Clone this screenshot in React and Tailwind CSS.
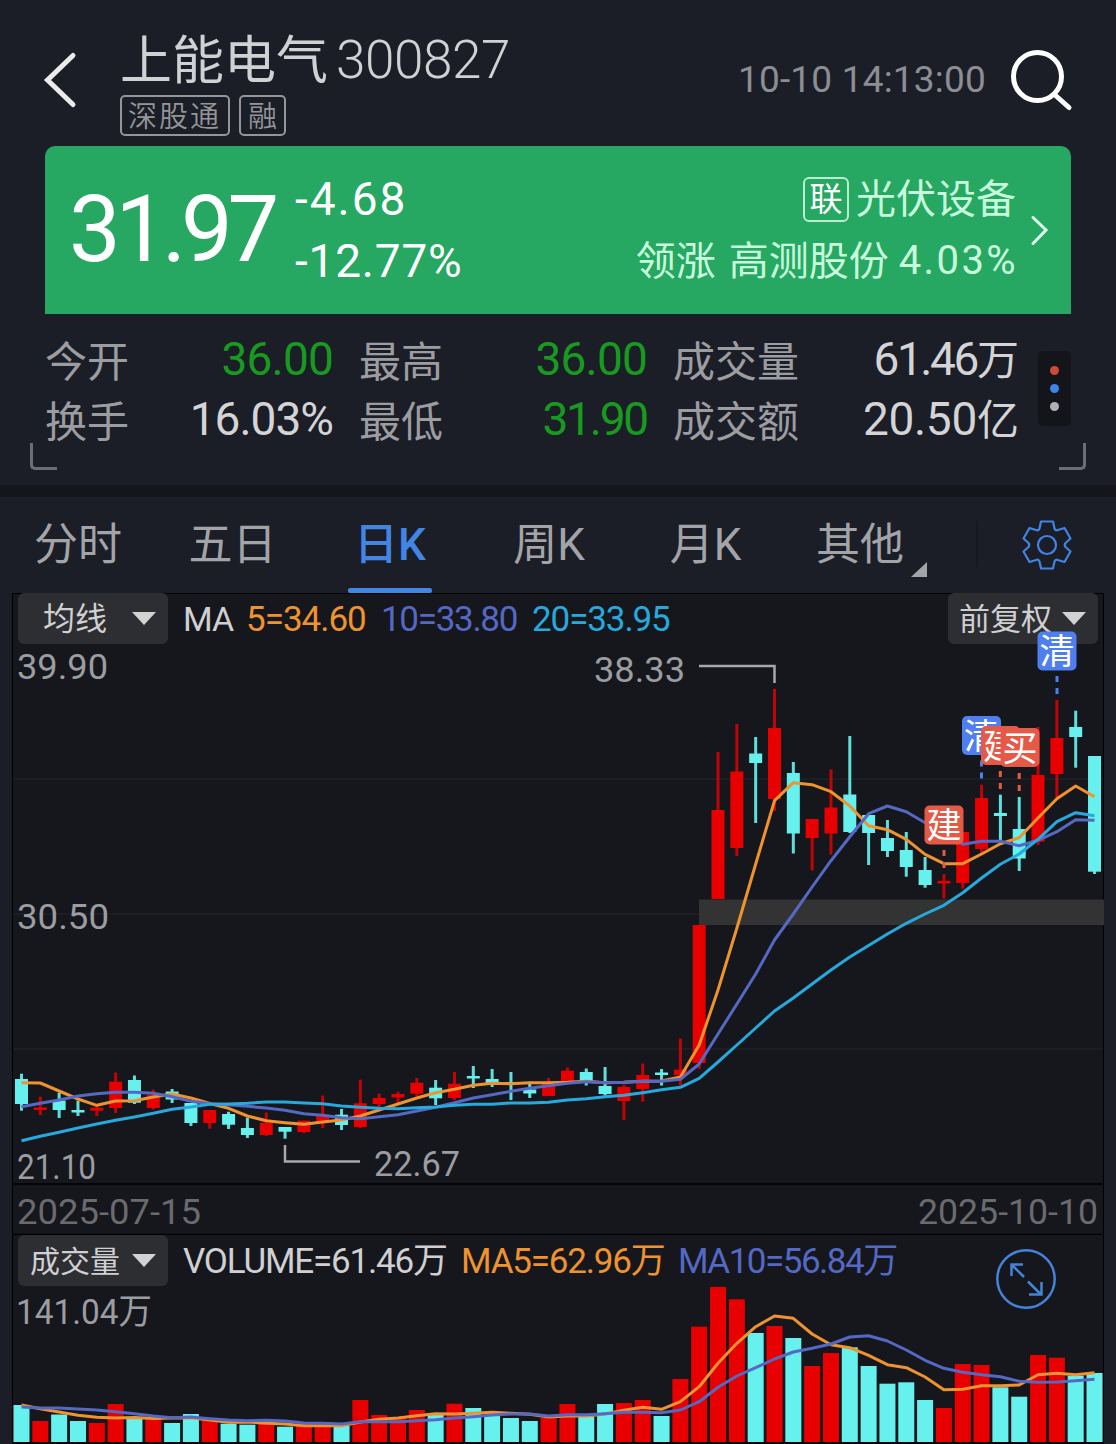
import clsx from 'clsx';

const UP = '#e80000';
const DOWN = '#66f0ee';
const COLORS = { ma5: '#ee9330', ma10: '#5468c4', ma20: '#27a9dd' };

// [color, high, bodyTop, bodyBottom, low, volumeTop]
const CANDLES = [
  ['d', 1073.7, 1079, 1104, 1110.7, 1405],
  ['u', 1096.7, 1107.5, 1110, 1115, 1421],
  ['d', 1092.7, 1100.5, 1110, 1118, 1414.5],
  ['d', 1100.7, 1110, 1112.5, 1116, 1421],
  ['u', 1105, 1107.7, 1110.7, 1116, 1423],
  ['u', 1072.5, 1081.7, 1108, 1113, 1404],
  ['d', 1075.5, 1080, 1102.7, 1104, 1417.7],
  ['u', 1089.5, 1095, 1108, 1109.5, 1419],
  ['d', 1089, 1091.5, 1099.5, 1103, 1423],
  ['d', 1103, 1103, 1123, 1126, 1414],
  ['u', 1110, 1110, 1123, 1128.7, 1420],
  ['d', 1111.7, 1114, 1124.7, 1129, 1423.7],
  ['d', 1117.7, 1128, 1135, 1138, 1424.7],
  ['u', 1112.5, 1123, 1135, 1136, 1423.3],
  ['d', 1127, 1127, 1131.7, 1138.7, 1426.7],
  ['u', 1120.7, 1120.7, 1132, 1133, 1423],
  ['u', 1095.5, 1115.7, 1123, 1128, 1424],
  ['d', 1109, 1114.7, 1125, 1130, 1426],
  ['u', 1079.7, 1103.3, 1127, 1128, 1400],
  ['u', 1093.5, 1098, 1104, 1107, 1415],
  ['u', 1091.7, 1094, 1097.5, 1103, 1418.5],
  ['u', 1078, 1082.7, 1093.7, 1096, 1410],
  ['d', 1080, 1087.7, 1098.3, 1105, 1415],
  ['u', 1072, 1083.7, 1098, 1100, 1403.7],
  ['d', 1066, 1076, 1078.5, 1088, 1408],
  ['d', 1069, 1079, 1083.5, 1087, 1415],
  ['d', 1072, 1082, 1084, 1100, 1418],
  ['d', 1081.7, 1089.5, 1093.5, 1098, 1421],
  ['u', 1078, 1083.5, 1096, 1096, 1418],
  ['u', 1067.5, 1070.7, 1081.5, 1081.5, 1404],
  ['d', 1068.5, 1072, 1081.5, 1085.5, 1416.7],
  ['d', 1067, 1086, 1094, 1095.5, 1404],
  ['u', 1084.7, 1087, 1101, 1120, 1403],
  ['u', 1063.5, 1075, 1089, 1101.7, 1400],
  ['d', 1069, 1072.5, 1075, 1085.5, 1416],
  ['u', 1038.5, 1069.7, 1075, 1085, 1379],
  ['u', 925, 925, 1063, 1069, 1326.7],
  ['u', 752, 810, 899, 899, 1287],
  ['u', 724, 771.5, 848, 856, 1299.3],
  ['d', 737, 753.5, 763, 823, 1333],
  ['u', 689, 728, 799, 811, 1326],
  ['d', 762, 773, 833.5, 853.5, 1338],
  ['u', 819, 819, 838, 870.5, 1366],
  ['u', 769.5, 807.5, 833.5, 854.5, 1353],
  ['d', 736, 794.5, 832, 833, 1347.3],
  ['d', 815, 815, 833, 865, 1366],
  ['d', 820, 838, 851, 857, 1383.7],
  ['d', 832, 850, 867, 876.7, 1382.3],
  ['d', 857, 870, 885, 887.7, 1400],
  ['u', 874, 881, 883.5, 898.5, 1408],
  ['u', 832, 832, 883, 888.7, 1364],
  ['u', 784.7, 798, 849, 853, 1365],
  ['d', 794.7, 813, 816, 840.7, 1387.3],
  ['d', 797, 829, 858.5, 871, 1396.7],
  ['u', 727, 775, 841.7, 845, 1355],
  ['u', 700, 738, 774, 798, 1357.7],
  ['d', 710.7, 727, 737, 767.7, 1375.7],
  ['d', 756, 756, 871.7, 874, 1373],
];

const MA5 = [
  1082.7, 1083, 1091, 1099, 1105.3, 1101, 1100.7, 1097, 1094, 1098, 1103.5, 1108.3, 1116, 1120.7, 1122.7,
  1124.3, 1122, 1120, 1116, 1110, 1104, 1098, 1092.7, 1089.3, 1085.3, 1083.3, 1083.7, 1082.7, 1082.7, 1082.3,
  1081.3, 1082.7, 1082.3, 1081.3, 1081, 1077, 1045, 990, 928, 864, 800.7, 782.7, 784.7, 791.7, 806,
  825.7, 829.7, 839.3, 854.3, 863.7, 863.7, 854, 843.7, 837.7, 818, 798.7, 786, 796.7,
];
const MA10 = [
  1106.7, 1103.3, 1100, 1096, 1093.7, 1092.3, 1092.3, 1093.3, 1096.7, 1101.3, 1103.7, 1104.7, 1106.3, 1108, 1110.3,
  1113.7, 1115.3, 1117.7, 1118.7, 1116.7, 1114.7, 1111, 1107.3, 1102.7, 1098, 1094.7, 1091.3, 1088.3, 1085.7, 1083.3,
  1081.7, 1082.7, 1082.3, 1081.3, 1081.3, 1079.3, 1064, 1034, 1004, 974, 940, 914, 887, 860.7, 836.7,
  813.7, 806, 811.7, 822.7, 833, 844.3, 841.3, 841.3, 845.7, 840.3, 831.7, 819.7, 820.3,
];
const MA20 = [
  1140.7, 1136.3, 1132.3, 1128, 1124, 1120.3, 1117, 1113.3, 1109.3, 1107, 1104.3, 1104, 1103.3, 1102, 1102,
  1103, 1103.7, 1106, 1107.3, 1108.3, 1108.7, 1107.7, 1107, 1105.3, 1104.3, 1104.3, 1103, 1103, 1102.3, 1100,
  1098.7, 1096.7, 1095.3, 1092.7, 1089.7, 1087.3, 1078.3, 1062, 1045, 1028, 1011, 998, 984, 970, 957,
  945.5, 934, 923.3, 914, 905.3, 892.7, 878, 864.3, 854, 839.3, 821.7, 812.7, 815.7,
];
const VOL_MA5 = [
  1405, 1408.7, 1412, 1415.3, 1417.3, 1418, 1417.5, 1418.5, 1418, 1417.7, 1420, 1422.3, 1422, 1423.3, 1424,
  1425.7, 1425.7, 1425.7, 1422, 1419.3, 1418, 1415.7, 1413.7, 1414, 1413.3, 1412.3, 1413.3, 1414.3, 1417, 1416,
  1416, 1414, 1410.3, 1407.3, 1409.3, 1401.7, 1386.7, 1363.3, 1343.3, 1326.7, 1316, 1318.3, 1334, 1344.7, 1347.7,
  1355.3, 1364.7, 1367.7, 1377, 1389.7, 1389.3, 1385.7, 1385.7, 1385, 1374.7, 1373.3, 1374.7, 1372.7,
];
const VOL_MA10 = [
  1407, 1408, 1408, 1409, 1410, 1411.7, 1413.7, 1416, 1417.7, 1417, 1418.7, 1420, 1420.7, 1420.3, 1421,
  1423, 1423.3, 1424, 1421.7, 1421.7, 1421.7, 1420.7, 1419.7, 1418, 1416.7, 1415, 1414, 1414, 1416, 1414.7,
  1414.7, 1413.7, 1412.3, 1412.3, 1412.7, 1410, 1401.7, 1387.3, 1376, 1367.7, 1359, 1352, 1348.3, 1344, 1337,
  1335.7, 1341, 1350, 1360.3, 1368.3, 1372.3, 1374.7, 1376.7, 1381.3, 1382.3, 1382, 1380.7, 1379.3,
];

const MARKERS = [
  { text: '清', x: 962, y: 716, type: 'sell', stem: 981.5, dashes: [760.5, 772.5] },
  { text: '建', x: 981, y: 726, type: 'buy', stem: 1000.3, dashes: [771, 783] },
  { text: '买', x: 1000.5, y: 728, type: 'buy', stem: 1019.2, dashes: [773, 785] },
  { text: '清', x: 1037.5, y: 631.5, type: 'sell', stem: 1057, dashes: [676, 688] },
  { text: '建', x: 924.5, y: 805.5, type: 'buy', stem: 944, dashes: [850, 862] },
];

const STATS = [
  [
    { label: '今开', value: '36.00', className: 'tracking-[-0.8px] text-[#189a20]' },
    { label: '换手', value: '16.03%', className: 'tracking-[-1px] text-[#d4d4d6]' },
  ],
  [
    { label: '最高', value: '36.00', className: 'tracking-[-0.8px] text-[#189a20]' },
    { label: '最低', value: '31.90', className: 'tracking-[-2.2px] text-[#189a20]' },
  ],
  [
    { label: '成交量', value: '61.46', unit: '万', className: 'tracking-[-2.4px] text-[#d4d4d6]' },
    { label: '成交额', value: '20.50', unit: '亿', className: 'tracking-[-0.3px] text-[#d4d4d6]' },
  ],
];

const xAt = (i) => 21.5 + i * 18.825;
const toPoints = (values) => values.map((y, i) => `${xAt(i).toFixed(1)},${y}`).join(' ');

function Line({ values, color }) {
  return <polyline points={toPoints(values)} fill="none" stroke={color} strokeWidth="3" strokeLinejoin="round" />;
}

function Label({ x, y, width, size = 35, fill = '#9c9da0', children }) {
  return (
    <text x={x} y={y} fontSize={size} fill={fill} textLength={width} lengthAdjust="spacingAndGlyphs">
      {children}
    </text>
  );
}

function Header() {
  return (
    <header className="flex h-[146px] pl-[42px] pr-[42px]">
      <svg className="mt-[50px] h-[60px] w-[36px]" viewBox="42 50 36 60" fill="none">
        <path d="M73 55.500L47.500 80L73 104.500" stroke="#ebebeb" strokeWidth="5" strokeLinecap="round" />
      </svg>
      <div className="ml-[42px] flex flex-col pt-[30px]">
        <h1 className="flex text-[53px] font-[350] leading-[60px] text-[#d0d1d3]">
          <span className="w-[216px] translate-y-[2px] text-[52px] font-normal">上能电气</span>
          <span className="tracking-[-0.4px]">300827</span>
        </h1>
        <div className="mt-[5px] flex gap-[9px] text-[29px] font-[350] leading-[41px] text-[#94969a]">
          <span className="h-[41px] w-[110px] rounded-[5px] border-2 border-[#94969a] pl-[6px] tracking-[2px]">深股通</span>
          <span className="h-[41px] w-[47px] rounded-[5px] border-2 border-[#94969a] text-center">融</span>
        </div>
      </div>
      <time className="ml-auto mt-[56px] text-[37px] leading-[48px] tracking-[0.2px] text-[#8c8e93]">10-10 14:13:00</time>
      <svg className="ml-[22px] mt-[46px] h-[66px] w-[66px]" viewBox="1008 46 66 66" fill="none" stroke="#fff" strokeLinecap="round">
        <ellipse cx="1037.500" cy="76.500" rx="24" ry="24" strokeWidth="5" />
        <path d="M1055 95L1069 107.500" strokeWidth="5" />
      </svg>
    </header>
  );
}

function PriceCard() {
  return (
    <section className="mx-[45px] flex h-[168px] rounded-t-[10px] bg-[#27a862] text-white">
      <div className="w-[232px] pl-[24px] pt-[40px] text-[92px] leading-[88px] tracking-[-5.2px]">31.97</div>
      <div className="ml-[18px] pt-[22px] text-[46px] leading-[62px]">
        <p className="tracking-[2px]">-4.68</p>
        <p className="tracking-[0.8px]">-12.77%</p>
      </div>
      <div className="ml-auto pt-[22px] text-[40px] leading-[62px] text-[#c8fadd]">
        <p className="flex items-center justify-end gap-[7px]">
          <span className="h-[45px] w-[46px] rounded-[6px] border-2 border-[#b8efd0] text-center text-[33px] leading-[42px] text-white">联</span>
          <span className="translate-y-[1px]">光伏设备</span>
        </p>
        <p className="flex justify-end">
          <span className="mr-[13px] translate-y-px">领涨</span>
          <span className="mr-[10px] translate-y-px">高测股份</span>
          <span className="-mr-[2px] tracking-[2.4px]">4.03%</span>
        </p>
      </div>
      <svg className="ml-[12px] mr-[19px] mt-[68px] h-[32px] w-[24px]" viewBox="0 0 24 32" fill="none">
        <path d="M5 3.500L18 16L5 29.500" stroke="#e0fff0" strokeWidth="3" strokeLinecap="round" />
      </svg>
    </section>
  );
}

function Stats() {
  return (
    <section className="relative flex h-[171px] pl-[45px] pt-[15px]">
      {STATS.map((col, i) => (
        <div key={i} className={clsx('mr-[26px] shrink-0', i === 2 ? 'w-[346px]' : 'w-[288px]')}>
          {col.map((s) => (
            <div key={s.label} className="flex h-[60px] items-baseline text-[46px] leading-[60px]">
              <span className="mr-auto translate-y-[2px] text-[42px] text-[#9c9da1]">{s.label}</span>
              <span className={s.className}>{s.value}</span>
              {s.unit && <span className="text-[42px] text-[#d4d4d6]">{s.unit}</span>}
            </div>
          ))}
        </div>
      ))}
      <div className="-ml-[7px] mt-[22px] flex h-[75px] w-[33px] flex-col items-center justify-center gap-[9px] rounded-[5px] bg-[#14151a]">
        <i className="size-[9px] rounded-full bg-[#cc4a38]" />
        <i className="size-[9px] rounded-full bg-[#3a84ea]" />
        <i className="size-[9px] rounded-full bg-[#b0b1b4]" />
      </div>
      <i className="absolute bottom-[15px] left-[30px] h-[27px] w-[27px] rounded-bl-[5px] border-b-[3px] border-l-[3px] border-[#6b6e76]" />
      <i className="absolute bottom-[15px] right-[30px] h-[27px] w-[27px] rounded-br-[5px] border-b-[3px] border-r-[3px] border-[#6b6e76]" />
    </section>
  );
}

function Gear() {
  return (
    <svg className="size-[54px]" viewBox="1020 518 54 54" fill="none" stroke="#4384e2" strokeWidth="2.200" strokeLinejoin="round">
      <path d="M1041 521.500H1053L1054.500 528.500Q1055.500 531 1058 530L1064.500 528L1070.500 538.500L1065.500 543Q1064 545 1065.500 547L1070.500 551.500L1064.500 562L1058 560Q1055.500 559 1054.500 561.500L1053 568.500H1041L1039.500 561.500Q1038.500 559 1036 560L1029.500 562L1023.500 551.500L1028.500 547Q1030 545 1028.500 543L1023.500 538.500L1029.500 528L1036 530Q1038.500 531 1039.500 528.500Z" />
      <circle cx="1047" cy="545" r="9" />
    </svg>
  );
}

function Tabs() {
  return (
    <nav className="flex h-[96px] text-[44px] leading-[97px] text-[#a3a4a7]">
      <span className="w-[156px] text-center">分时</span>
      <span className="w-[153px] text-center">五日</span>
      <span className="flex w-[162px] flex-col items-center text-[#4285e4]">
        <span className="h-[91px] font-medium">日K</span>
        <i className="h-[5px] w-[84px] rounded-[2px] bg-[#4285e4]" />
      </span>
      <span className="w-[156px] text-center">周K</span>
      <span className="w-[157px] text-center">月K</span>
      <span className="flex w-[192px] pl-[32px]">
        其他
        <svg className="ml-[7px] mt-[65px] h-[15px] w-[16px]" viewBox="0 0 16 15">
          <path d="M16 0V15H0Z" fill="#a3a4a7" />
        </svg>
      </span>
      <i className="mt-[24px] h-[46px] w-[2px] bg-[#16181f]" />
      <span className="ml-[42px] mt-[21px]">
        <Gear />
      </span>
    </nav>
  );
}

function DropButton({ children, className }) {
  return (
    <button className={clsx('flex h-[51px] w-[150px] shrink-0 items-center justify-between rounded-[6px] bg-[#2d2e32] pr-[12px] leading-[51px] text-[#d0d0d2]', className)}>
      <span className="translate-y-px">{children}</span>
      <svg className="h-[13px] w-[24px]" viewBox="0 0 24 13">
        <path d="M0 0H24L12 13Z" fill="#d2d2d3" />
      </svg>
    </button>
  );
}

function CandleChart() {
  return (
    <section className="relative h-[642px] border-x border-t border-black bg-[#15171c]">
      <div className="-mt-px flex pl-[5px] pr-[5px] text-[35px] leading-[53px]">
        <DropButton className="pl-[25px] text-[32px]">均线</DropButton>
        <span className="ml-[15px] w-[63px] text-[34px] tracking-[-1px] text-[#d0d0d2]">MA</span>
        <span className="w-[135px] tracking-[-1px] text-[#ee9330]">5=34.60</span>
        <span className="w-[151px] tracking-[-1.3px] text-[#5468c4]">10=33.80</span>
        <span className="tracking-[-1.1px] text-[#27a9dd]">20=33.95</span>
        <DropButton className="ml-auto pl-[11px] text-[31px]">前复权</DropButton>
      </div>
      <svg className="absolute -left-px -top-px h-[642px] w-[1092px]" viewBox="12 593 1092 642">
        {[779, 914, 1049].map((y) => (
          <path key={y} d={`M13 ${y}H1103`} stroke="#202227" strokeWidth="1.500" />
        ))}
        <path d="M12 1184H1104M12 1234.500H1104" stroke="#000" strokeWidth="1.500" />
        <rect x="699" y="899.500" width="405" height="25.500" fill="#333" />
        {CANDLES.map(([dir, high, top, bottom, low], i) => (
          <g key={i} fill={dir === 'u' ? UP : DOWN}>
            <rect x={xAt(i) - 1.5} y={high} width="3" height={low - high} opacity={dir === 'u' ? 0.8 : 0.92} />
            <rect x={xAt(i) - 6.5} y={top} width="13" height={bottom - top} />
          </g>
        ))}
        <Line values={MA5} color={COLORS.ma5} />
        <Line values={MA10} color={COLORS.ma10} />
        <Line values={MA20} color={COLORS.ma20} />
        <path d="M699 666H774.500V683M285 1145V1161.500H360" fill="none" stroke="#a8a8aa" strokeWidth="2.500" />
        <Label x={17} y={679} width={91}>39.90</Label>
        <Label x={17} y={929} width={92}>30.50</Label>
        <Label x={17} y={1179} width={79}>21.10</Label>
        <Label x={594} y={682} width={91}>38.33</Label>
        <Label x={374} y={1176} width={86}>22.67</Label>
        <Label x={17} y={1224} width={184} fill="#6a6b6f">2025-07-15</Label>
        <Label x={918} y={1224} width={180} fill="#6a6b6f">2025-10-10</Label>
        {MARKERS.map((m) => {
          const fill = m.type === 'buy' ? '#e45a47' : '#4f7fee';
          return (
            <g key={m.x}>
              {m.dashes.map((y) => (
                <rect key={y} x={m.stem - 1.5} y={y} width="3" height="6" fill={fill} />
              ))}
              <rect x={m.x} y={m.y} width="39" height="39" rx="5" fill={fill} />
              <text x={m.x + 19.5} y={m.y + 32.5} fontSize="35" fill="#fff" textAnchor="middle">
                {m.text}
              </text>
            </g>
          );
        })}
      </svg>
    </section>
  );
}

function VolumeChart() {
  return (
    <section className="relative h-[209px] border-x border-black bg-[#15171c]">
      <div className="flex pl-[5px] text-[35px] leading-[53px]">
        <DropButton className="pl-[12px] text-[30px]">成交量</DropButton>
        <span className="ml-[15px] w-[278px] tracking-[-1.2px] text-[#d0d0d2]">VOLUME=61.46万</span>
        <span className="w-[217px] tracking-[-1.2px] text-[#ee9330]">MA5=62.96万</span>
        <span className="tracking-[-1.5px] text-[#5468c4]">MA10=56.84万</span>
      </div>
      <svg className="absolute -left-px top-0 h-[209px] w-[1092px]" viewBox="12 1235 1092 209">
        {CANDLES.map((c, i) => (
          <rect key={i} x={xAt(i) - 8} y={c[5]} width="16" height={1442 - c[5]} fill={c[0] === 'u' ? UP : DOWN} />
        ))}
        <Line values={VOL_MA5} color={COLORS.ma5} />
        <Line values={VOL_MA10} color={COLORS.ma10} />
        <path d="M12 1443H1104" stroke="#000" strokeWidth="1.500" />
        <Label x={16} y={1324} width={136}>141.04万</Label>
        <g fill="none" stroke="#4384d8" strokeWidth="2.500">
          <circle cx="1026" cy="1279" r="28.700" />
          <path d="M1024 1277L1011.500 1264.500M1011.500 1276V1264.500H1023M1028 1281.500L1041 1294.500M1041.500 1282V1294.500H1029" />
        </g>
      </svg>
    </section>
  );
}

export default function App() {
  return (
    <main className="h-[1444px] w-[1116px] overflow-hidden bg-[#1b1e27] font-['Roboto','Noto_Sans_CJK_SC',sans-serif] font-normal">
      <Header />
      <PriceCard />
      <Stats />
      <div className="h-[12px] bg-[#15161b]" />
      <Tabs />
      <div className="mx-[12px]">
        <CandleChart />
        <VolumeChart />
      </div>
    </main>
  );
}
